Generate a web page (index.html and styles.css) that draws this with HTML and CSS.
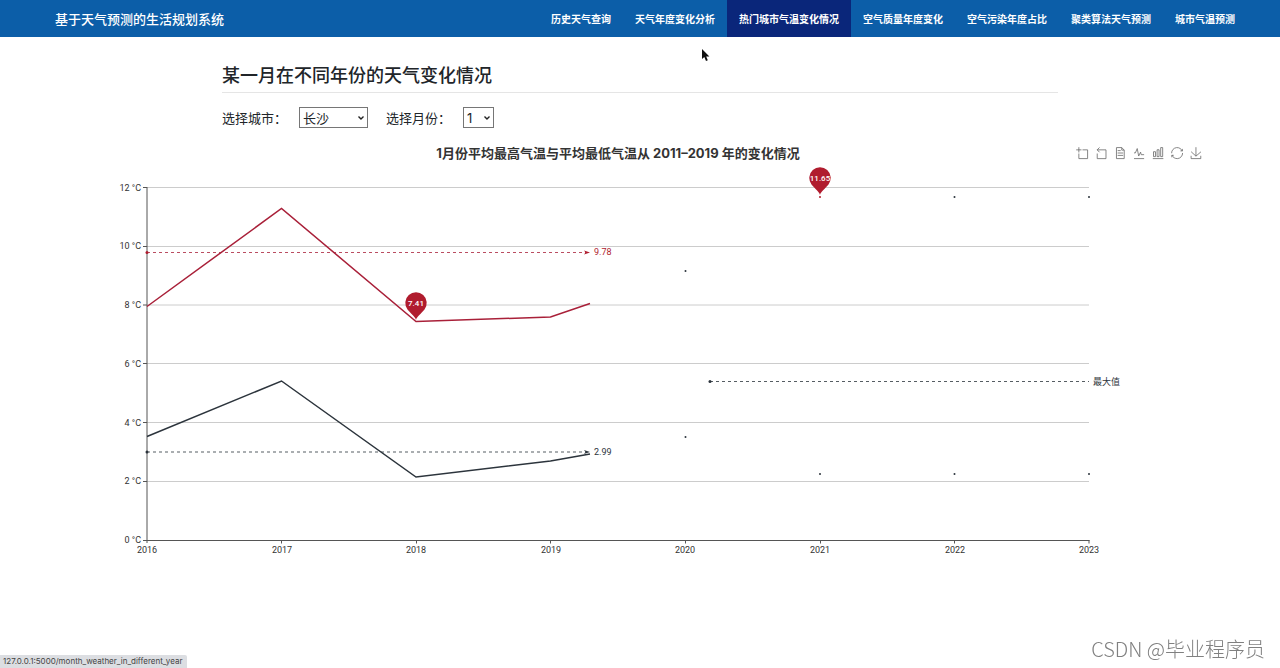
FILE: index.html
```html
<!DOCTYPE html>
<html lang="zh-CN">
<head>
<meta charset="utf-8">
<meta name="viewport" content="width=device-width, initial-scale=1">
<title>基于天气预测的生活规划系统</title>
<link rel="stylesheet" href="styles.css">
</head>
<body>
<header class="navbar">
  <a class="brand" href="#">基于天气预测的生活规划系统</a>
  <nav class="nav">
    <a href="#">历史天气查询</a>
    <a href="#">天气年度变化分析</a>
    <a class="active" href="#">热门城市气温变化情况</a>
    <a href="#">空气质量年度变化</a>
    <a href="#">空气污染年度占比</a>
    <a href="#">聚类算法天气预测</a>
    <a href="#">城市气温预测</a>
  </nav>
</header>

<main>
  <section class="intro">
    <h1>某一月在不同年份的天气变化情况</h1>
    <form class="filters">
      <label for="city">选择城市：</label>
      <select id="city" class="city"><option>长沙</option></select>
      <label for="month">选择月份：</label>
      <select id="month" class="month"><option>1</option></select>
    </form>
  </section>

  <section class="chart">
    <div class="chart-head">
      <h2>1月份平均最高气温与平均最低气温从 2011–2019 年的变化情况</h2>
      <div class="toolbox">
        <button type="button" aria-label="区域缩放"><svg viewBox="-1 -1 61 61"><path d="M0,13.5h26.9 M13.5,26.9V0 M32.1,13.5H58V58H13.5V32.1"/></svg></button>
        <button type="button" aria-label="区域缩放还原"><svg viewBox="-1 -1 61 61"><path d="M22,1.4L9.9,13.5l12.3,12.3 M10.3,13.5H54.9v44.6H10.3v-26"/></svg></button>
        <button type="button" aria-label="数据视图"><svg viewBox="-1 -1 61 61"><path d="M17.5,17.3H33 M45.4,29.5h-28 M11.5,2v56H51V14.8L38.4,2H11.5z M38.4,2.2v12.7H51 M45.4,41.7h-28"/></svg></button>
        <button type="button" aria-label="切换为折线图"><svg viewBox="-1 -1 61 61"><path d="M4.1,28.9h7.1l9.3-22l7.4,38l9.7-19.7l3,12.8h14.9M4.1,58h51.4"/></svg></button>
        <button type="button" aria-label="切换为柱状图"><svg viewBox="-1 -1 61 61"><path d="M6.7,22.9h10V48h-10V22.9zM24.9,13h10v35h-10V13zM43.2,2h10v46h-10V2zM3.1,58h53.7"/></svg></button>
        <button type="button" aria-label="还原"><svg viewBox="-1 -1 61 61"><path d="M47,18.9h9.8V8.7 M56.3,20.1C52.1,9,40.5,0.6,26.8,2.1C12.6,3.7,1.6,16.2,2.1,30.6 M13,41.1H3.1v10.2 M3.7,39.9c4.2,11.1,15.8,19.5,29.5,18c14.2-1.6,25.2-14.1,24.7-28.5"/></svg></button>
        <button type="button" aria-label="保存为图片"><svg viewBox="-1 -1 61 61"><path d="M4.7,22.9L29.3,45.5L54.7,23.4M4.6,43.6L4.6,58L53.8,58L53.8,43.6M29.2,45.1L29.2,0"/></svg></button>
      </div>
    </div>
    <svg class="plot" viewBox="29 164 1178 400" role="img" aria-label="平均最高气温与平均最低气温折线图">
      <path class="grid" d="M147 187.5H1089M147 246.5H1089M147 305H1089M147 363.5H1089M147 422.5H1089M147 481.5H1089"/>
      <path class="axis" d="M147 187V543M143 540.5H1089.5M143 187.5h4M143 246.5h4M143 305h4M143 363.5h4M143 422.5h4M143 481.5h4M281.5 540v3.5M416.5 540v3.5M550.5 540v3.5M685.5 540v3.5M820.5 540v3.5M954.5 540v3.5M1089 540v3.5"/>
      <g class="tick tick-y">
        <text x="141" y="191">12 °C</text>
        <text x="141" y="249">10 °C</text>
        <text x="141" y="308">8 °C</text>
        <text x="141" y="367">6 °C</text>
        <text x="141" y="426">4 °C</text>
        <text x="141" y="484">2 °C</text>
        <text x="141" y="543">0 °C</text>
      </g>
      <g class="tick tick-x">
        <text x="147" y="553">2016</text>
        <text x="282" y="553">2017</text>
        <text x="416" y="553">2018</text>
        <text x="551" y="553">2019</text>
        <text x="685" y="553">2020</text>
        <text x="820" y="553">2021</text>
        <text x="955" y="553">2022</text>
        <text x="1089" y="553">2023</text>
      </g>

      <g class="high">
        <polyline class="series" points="147,306.5 281.5,208.5 416,321.5 550.5,317 590,303.5"/>
        <path class="mark" d="M147 252.5H586"/>
        <circle cx="147" cy="252.5" r="1.5"/>
        <path d="M584 250.5l6 2-6 2 1.5-2z"/>
        <text x="594" y="255">9.78</text>
        <circle cx="820" cy="197" r="1"/>
        <path d="M820 195C819.5 192 815 189 811.5 184.500A10.7 10.7 0 1 1 828.5 184.500C825 189 820.5 192 820 195z"/>
        <path d="M416 320C415.5 317 411 314 407.5 309.500A10.7 10.7 0 1 1 424.5 309.500C421 314 416.5 317 416 320z"/>
      </g>
      <g class="pin-label">
        <text x="820" y="181">11.65</text>
        <text x="416" y="306">7.41</text>
      </g>

      <g class="low">
        <polyline class="series" points="147,436.5 281.5,381 416,477 550.5,461 590,454"/>
        <path class="mark" d="M147 452H586M710 381.5H1089"/>
        <circle cx="147" cy="452" r="1.5"/>
        <circle cx="710" cy="381.5" r="1.5"/>
        <path d="M584 450l6 2-6 2 1.5-2z"/>
        <text x="594" y="455">2.99</text>
        <text x="1093" y="385">最大值</text>
        <circle cx="685.5" cy="271" r="1"/>
        <circle cx="954.5" cy="197" r="1"/>
        <circle cx="1089" cy="197" r="1"/>
        <circle cx="685.5" cy="437" r="1"/>
        <circle cx="820" cy="474" r="1"/>
        <circle cx="954.5" cy="474" r="1"/>
        <circle cx="1089" cy="474" r="1"/>
      </g>
    </svg>
  </section>
</main>

<svg class="cursor" viewBox="0 0 10 14" aria-hidden="true"><path d="M1 1v10l2.3-2 1.7 4 1.8-.8L5.2 8.400H8.4z"/></svg>
<div class="status">127.0.0.1:5000/month_weather_in_different_year</div>
<div class="watermark">CSDN @毕业程序员</div>
</body>
</html>
```
FILE: styles.css
```css
* {
  box-sizing: border-box;
}

body {
  margin: 0;
  min-height: 100vh;
  background: #fff;
  color: #212529;
  font-family: Inter, "Noto Sans CJK SC", sans-serif;
  font-size: 13px;
}

.navbar {
  display: flex;
  align-items: stretch;
  justify-content: space-between;
  min-height: 37px;
  padding: 0 33px 0 55px;
  background: #0c5ea8;
}

.navbar a {
  display: flex;
  align-items: center;
  color: #fff;
  text-decoration: none;
  white-space: nowrap;
}

.brand {
  font-size: 13px;
  font-weight: 500;
}

.nav {
  display: flex;
}

.nav a {
  padding: 0 12px;
  font-size: 10px;
  font-weight: 700;
}

.nav .active {
  background: #0a267a;
}

.intro {
  max-width: 836px;
  margin: 0 auto;
  padding-top: 27px;
}

h1 {
  margin: 0;
  padding-bottom: 4px;
  border-bottom: 1px solid #e5e5e5;
  font-size: 18px;
  font-weight: 500;
  line-height: 24px;
}

.filters {
  display: flex;
  align-items: center;
  margin-top: 14px;
}

.filters label {
  width: 65px;
}

.filters select {
  appearance: none;
  height: 21px;
  margin: 0 18px 0 12px;
  padding: 0 0 0 3px;
  border: 1px solid #767676;
  border-radius: 0;
  background: #fff url("data:image/svg+xml,%3Csvg xmlns='http://www.w3.org/2000/svg' width='8' height='6' fill='none' stroke='%23222' stroke-width='1.4'%3E%3Cpath d='M1.500 1.500L4 4l2.500-2.500'/%3E%3C/svg%3E") no-repeat right 2px center;
  color: #212529;
  font: inherit;
}

.filters .city {
  width: 69px;
}

.filters .month {
  width: 31px;
}

.chart {
  margin: 14px 73px 0 29px;
}

.chart-head {
  display: grid;
  grid-template-columns: 1fr auto 1fr;
  align-items: center;
  min-height: 22px;
}

h2 {
  grid-column: 2;
  margin: 0;
  color: #333;
  font-size: 13px;
  font-weight: 700;
  line-height: 22px;
}

.toolbox {
  display: flex;
  justify-content: flex-end;
  gap: 7px;
  padding-right: 5px;
}

.toolbox button {
  width: 12px;
  height: 12px;
  padding: 0;
  border: 0;
  background: none;
}

.toolbox svg {
  display: block;
  width: 12px;
  height: 12px;
  overflow: visible;
  fill: none;
  stroke: #666;
  stroke-width: 4;
}

.plot {
  display: block;
  width: 100%;
  font-family: Roboto, "Noto Sans CJK SC", sans-serif;
  font-size: 9px;
}

.grid {
  stroke: #ccc;
}

.axis {
  fill: none;
  stroke: #555;
}

.tick {
  fill: #333;
}

.tick-y {
  text-anchor: end;
}

.tick-x,
.pin-label {
  text-anchor: middle;
}

.pin-label {
  fill: #fff;
  font-size: 8px;
  font-weight: 500;
}

.high {
  fill: #b01c2e;
}

.low {
  fill: #2c343c;
}

.series,
.mark {
  fill: none;
}

.high .series,
.high .mark {
  stroke: #a92039;
}

.low .series,
.low .mark {
  stroke: #2c343c;
}

.plot .series {
  stroke-width: 1.5;
}

.mark {
  stroke-dasharray: 3 3;
  opacity: 0.8;
}

.cursor {
  position: absolute;
  top: 48px;
  left: 701px;
  width: 10px;
  height: 14px;
  fill: #111;
  stroke: #fff;
  stroke-width: 1;
  paint-order: stroke;
}

.status {
  position: fixed;
  bottom: 0;
  left: 0;
  padding: 0 5px 0 3px;
  border-top-right-radius: 2px;
  background: #dcdee2;
  color: #444;
  font-family: Inter, sans-serif;
  font-size: 8px;
  line-height: 13px;
}

.watermark {
  position: fixed;
  right: 15px;
  bottom: 5px;
  color: #808080;
  font-family: "Noto Sans CJK SC", sans-serif;
  font-size: 20px;
  font-weight: 300;
  line-height: 28px;
}
```
